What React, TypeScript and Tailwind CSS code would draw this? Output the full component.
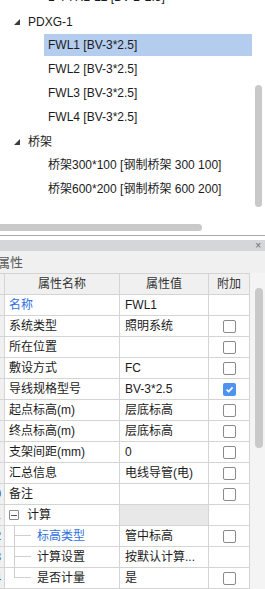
import type { FC } from 'react';

type Row = {
  n: number;
  name: string;
  value?: string;
  check?: boolean | null;
  blue?: boolean;
  child?: boolean;
  last?: boolean;
  group?: boolean;
};

const rows: Row[] = [
  { n: 1, name: '名称', value: 'FWL1', check: null, blue: true },
  { n: 2, name: '系统类型', value: '照明系统', check: false },
  { n: 3, name: '所在位置', value: '', check: false },
  { n: 4, name: '敷设方式', value: 'FC', check: false },
  { n: 5, name: '导线规格型号', value: 'BV-3*2.5', check: true },
  { n: 6, name: '起点标高(m)', value: '层底标高', check: false },
  { n: 7, name: '终点标高(m)', value: '层底标高', check: false },
  { n: 8, name: '支架间距(mm)', value: '0', check: false },
  { n: 9, name: '汇总信息', value: '电线导管(电)', check: false },
  { n: 10, name: '备注', value: '', check: false },
  { n: 11, name: '计算', group: true, check: null },
  { n: 12, name: '标高类型', value: '管中标高', check: false, blue: true, child: true },
  { n: 13, name: '计算设置', value: '按默认计算...', check: null, child: true },
  { n: 14, name: '是否计量', value: '是', check: false, child: true, last: true },
];

const Expanded: FC = () => (
  <svg width="6" height="6" viewBox="0 0 6 6" className="shrink-0">
    <polygon points="0,6 6,6 6,0" fill="#3c3c3c" />
  </svg>
);

const CheckBox: FC<{ on?: boolean }> = ({ on }) =>
  on ? (
    <span className="w-[13px] h-[13px] rounded-[2px] bg-[#4d93ef] flex items-center justify-center">
      <svg width="9" height="9" viewBox="0 0 9 9">
        <path d="M1.6 4.6 L3.7 6.6 L7.6 2.4" stroke="#fff" strokeWidth="1.7" fill="none" />
      </svg>
    </span>
  ) : (
    <span className="w-[13px] h-[13px] rounded-[2px] border border-[#8a8a8a] bg-white" />
  );

const TreeGroup: FC<{ label: string }> = ({ label }) => (
  <div className="h-6 flex items-center pl-[14px] gap-2">
    <Expanded />
    <span>{label}</span>
  </div>
);

const TreeItem: FC<{ label: string; selected?: boolean }> = ({ label, selected }) => (
  <div className="h-6 flex items-start">
    <div
      className={`ml-[44px] w-[208px] h-[22px] flex items-center pl-1 ${
        selected ? 'bg-[#b4cdee]' : ''
      }`}
    >
      {label}
    </div>
  </div>
);

const App: FC = () => {
  return (
    <div className="w-[265px] h-[589px] overflow-hidden bg-white text-[12px] leading-none text-[#1b1b1b] font-['Liberation_Sans','Noto_Sans_CJK_SC',sans-serif]">
      {/* Tree */}
      <div className="relative h-[236px] border-b border-[#a9a9a9] overflow-hidden">
        <div className="-mt-[14px]">
          <TreeItem label="1-YYRL-L2 [BV-2*2.5]" />
          <TreeGroup label="PDXG-1" />
          <TreeItem label="FWL1 [BV-3*2.5]" selected />
          <TreeItem label="FWL2 [BV-3*2.5]" />
          <TreeItem label="FWL3 [BV-3*2.5]" />
          <TreeItem label="FWL4 [BV-3*2.5]" />
          <TreeGroup label="桥架" />
          <TreeItem label="桥架300*100 [钢制桥架 300 100]" />
          <TreeItem label="桥架600*200 [钢制桥架 600 200]" />
        </div>
        <div className="absolute left-[255px] top-[85px] w-[7px] h-[122px] rounded-full bg-[#c9c9c9]" />
        <div className="absolute left-0 top-[224px] w-[202px] h-[7px] rounded-r-full bg-[#c9c9c9]" />
      </div>
      <div className="h-[4px]" />

      {/* Panel title */}
      <div className="h-[11px] bg-[#d5d6da] flex items-center justify-end pr-[4px]">
        <span className="text-[10px] text-[#6a6a6a]">×</span>
      </div>
      <div className="h-[22px] bg-[#f0f0f0] flex items-center">
        <span className="-ml-[3px] text-[#5a5a5a] text-[13px]">属性</span>
      </div>

      {/* Property grid */}
      <div className="flex">
        <div className="-ml-[15px] w-[265px] shrink-0 border-t border-[#d4d4d4]">
          <div className="flex h-[22px] -mt-px border-t border-[#d4d4d4] bg-[#f0f0f0] text-[#333]">
            <div className="w-[20px] border-r border-b border-[#d4d4d4]" />
            <div className="w-[115px] border-r border-b border-[#d4d4d4] flex items-center justify-center">
              属性名称
            </div>
            <div className="w-[89px] border-r border-b border-[#d4d4d4] flex items-center justify-center">
              属性值
            </div>
            <div className="w-[41px] border-r border-b border-[#d4d4d4] flex items-center justify-center">
              附加
            </div>
          </div>
          {rows.map((r) => (
            <div key={r.n} className="flex h-[21px]">
              <div className="w-[20px] border-r border-b border-[#d4d4d4] bg-[#f0f0f0] flex items-center justify-center text-[#34558b]">
                {r.n}
              </div>
              <div className="w-[115px] border-r border-b border-[#d4d4d4] flex items-center bg-white">
                {r.group ? (
                  <>
                    <span className="ml-[4px] w-[10px] h-[10px] border border-[#8a8a8a] rounded-[1px] flex items-center justify-center">
                      <span className="w-[6px] h-px bg-[#555]" />
                    </span>
                    <span className="ml-[8px]">{r.name}</span>
                  </>
                ) : r.child ? (
                  <>
                    <div className="ml-[9px] w-[17px] h-full flex flex-col">
                      <div className="h-1/2 border-l border-b border-[#cfcfcf]" />
                      <div className={`h-1/2 ${r.last ? '' : 'border-l border-[#cfcfcf]'}`} />
                    </div>
                    <span className={`ml-[6px] ${r.blue ? 'text-[#2f6fe0]' : ''}`}>{r.name}</span>
                  </>
                ) : (
                  <span className={`ml-[4px] ${r.blue ? 'text-[#2f6fe0]' : ''}`}>{r.name}</span>
                )}
              </div>
              <div
                className={`w-[89px] border-r border-b border-[#d4d4d4] flex items-center pl-[5px] ${
                  r.group ? 'bg-[#e8e8e8]' : 'bg-white'
                }`}
              >
                {r.value}
              </div>
              <div className="w-[41px] border-r border-b border-[#d4d4d4] flex items-center justify-center bg-white">
                {r.check !== null && r.check !== undefined && <CheckBox on={r.check} />}
              </div>
            </div>
          ))}
        </div>
        <div className="w-[15px] shrink-0 self-stretch bg-[#f4f4f4] pl-[5px] pt-[15px]">
          <div className="w-[8px] h-[160px] rounded-full bg-[#c9c9c9]" />
        </div>
      </div>
    </div>
  );
};

export default App;
